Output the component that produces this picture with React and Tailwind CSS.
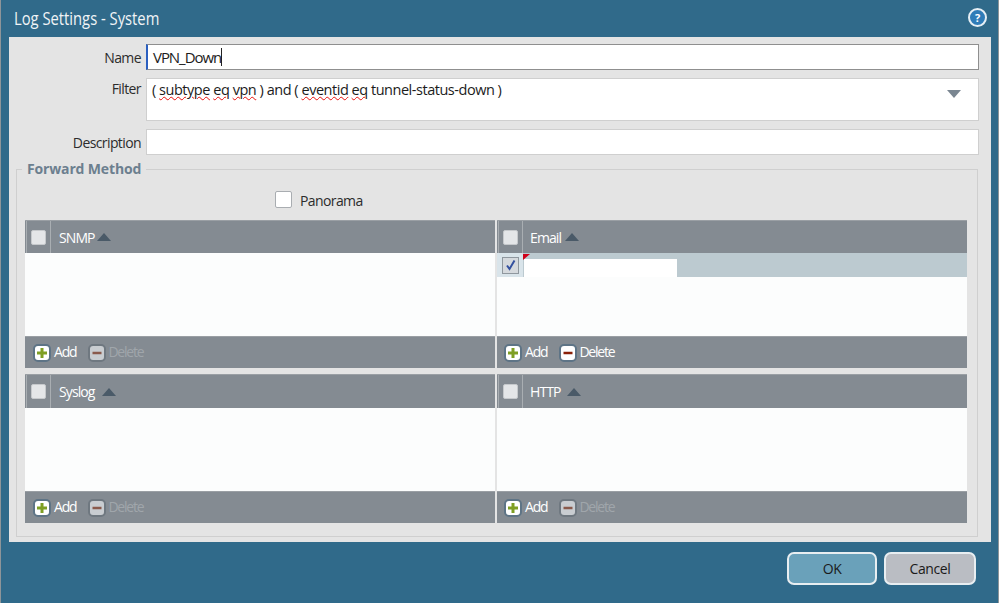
const font = { fontFamily: '"Open Sans", sans-serif' };

function CheckBox({ big }) {
  return (
    <div className={`${big ? 'w-[17px] h-[17px] bg-white border-[#a9adb1]' : 'w-[15px] h-[15px] bg-[#e4e6e8] border-[#c6c9cc]'} border rounded-[2px] shrink-0`}></div>
  );
}

function Triangle({ up, color }) {
  return (
    <svg width="14" height="8" viewBox="0 0 14 8" className="shrink-0">
      <path d={up ? 'M0 8 L14 8 L7 0 Z' : 'M0 0 L14 0 L7 8 Z'} fill={color} />
    </svg>
  );
}

function ActionIcon({ type, disabled }) {
  const fill = disabled ? 'bg-[#c9cdd1] border-[#6f7880]' : 'bg-white border-[#5e7486]';
  const plus = type === 'add';
  return (
    <div className={`w-[18px] h-[18px] rounded-[5px] border-2 ${fill} flex items-center justify-center shrink-0`}>
      <svg width="12" height="12" viewBox="0 0 12 12">
        {plus && <path d="M6 1 V11 M1 6 H11" stroke="#7f9f24" strokeWidth="3" />}
        {!plus && <path d="M1.5 6 H10.5" stroke={disabled ? '#8a5a4c' : '#8b2008'} strokeWidth="2.5" />}
      </svg>
    </div>
  );
}

function Panel({ title, deleteEnabled, children, tall, right, triangleGap }) {
  return (
    <div className="flex flex-col bg-[#fcfdfd]">
      <div className={`${tall ? 'h-[34px]' : 'h-[33px]'} bg-[#848b92] flex items-center text-white text-[14px] tracking-[-0.9px] border-t border-[#9a9fa4]`}>
        <div className="ml-[1px] w-[25px] h-full border-x border-[#a9aeb2] flex items-center justify-center">
          <CheckBox />
        </div>
        <span className={right ? 'ml-[7px]' : 'ml-[8px]'}>{title}</span>
        <div className={triangleGap}>
          <Triangle up color="#4a5a68" />
        </div>
      </div>
      <div className="flex-1">{children}</div>
      <div className={`h-[32px] bg-[#848b92] flex items-center ${right ? 'pl-[7px]' : 'pl-[8px]'} text-[14px] tracking-[-1.2px] border-t border-[#9a9fa4]`}>
        <ActionIcon type="add" />
        <span className="ml-[3px] pb-[2px] text-white">Add</span>
        <div className="ml-[12px]">
          <ActionIcon type="delete" disabled={!deleteEnabled} />
        </div>
        <span className={`ml-[2px] pb-[2px] ${deleteEnabled ? 'text-white' : 'text-[#a0a6ab]'}`}>Delete</span>
      </div>
    </div>
  );
}

function Row({ label, children, itemsStart, className }) {
  return (
    <div className={`flex gap-[5px] ${itemsStart ? 'items-start' : 'items-center'} ${className}`}>
      <div className="w-[125px] text-right text-[14px] tracking-[-0.6px] text-[#2c2c2c]">{label}</div>
      {children}
    </div>
  );
}

function Squiggle({ children }) {
  return <span className="underline decoration-wavy decoration-[#e8100c] decoration-1">{children}</span>;
}

export default function App() {
  return (
    <div style={font} className="w-[999px] h-[603px] bg-[#306a8a] border-x border-[#8e9599] flex flex-col overflow-hidden">
      <div className="h-[37px] shrink-0 flex items-center justify-between pl-[13px] pr-[11px] text-white">
        <span className="text-[18px] origin-left scale-x-[0.82] whitespace-nowrap text-[#f0f4f6]">Log Settings - System</span>
        <div className="mb-[2px] w-[19px] h-[19px] rounded-full bg-[#2f7cb8] border-2 border-[#e6eff5] flex items-center justify-center text-[11px] font-bold leading-none">?</div>
      </div>

      <div className="ml-[8px] mr-[7px] h-[505px] bg-[#e4e4e4] pt-[7px] pl-[7px] pr-[12px] shrink-0 flex flex-col">
        <Row label="Name" className="h-[26px]">
          <div className="flex-1 h-full bg-white border border-[#8f8f8f] border-l-2 border-l-[#2a5fc0] flex items-center pl-[5px] text-[15px] tracking-[-1.05px] text-[#1c1c1c]">
            VPN_Down<span className="w-px h-[18px] bg-[#222]"></span>
          </div>
        </Row>
        <Row label="Filter" itemsStart className="h-[43px] mt-[8px]">
          <div className="flex-1 h-full bg-white border border-[#cfcfcf] flex justify-between pl-[5px] pr-[17px] text-[14.5px] tracking-[-0.47px] text-[#1c1c1c]">
            <span>( <Squiggle>subtype</Squiggle> <Squiggle>eq</Squiggle> <Squiggle>vpn</Squiggle> ) and ( <Squiggle>eventid</Squiggle> <Squiggle>eq</Squiggle> tunnel-status-down )</span>
            <div className="pt-[11px]">
              <Triangle color="#7a8691" />
            </div>
          </div>
        </Row>
        <Row label="Description" className="h-[26px] mt-[8px]">
          <div className="flex-1 h-full bg-white border border-[#cfcfcf]"></div>
        </Row>

        <fieldset className="mt-[5px] mr-[1px] border border-[#cfcfcf] pl-[8px] pr-[10px] h-[377px]">
          <legend className="ml-[-3px] px-[5px] h-[18px] leading-[18px] text-[14px] font-bold tracking-[-0.15px] text-[#6c7f8f]">Forward Method</legend>
          <div className="mt-[13px] h-[17px] flex items-center pl-[250px] gap-[8px] text-[14px] tracking-[-0.6px] text-[#2c2c2c]">
            <CheckBox big />
            <span className="pt-[2px]">Panorama</span>
          </div>
          <div className="mt-[12px] grid grid-cols-2 gap-x-[2px] gap-y-[6px] grid-rows-[148px_149px]">
            <Panel title="SNMP" triangleGap="ml-[2px]" />
            <Panel title="Email" deleteEnabled right triangleGap="ml-[4px]">
              <div className="h-[24px] bg-[#bccad0] flex">
                <div className="w-[26px] bg-[#d9e4ea] flex items-center justify-center">
                  <div className="w-[17px] h-[17px] bg-[#d5d9dd] border border-[#8f979e] flex items-center justify-center">
                    <svg width="11" height="12" viewBox="0 0 11 12">
                      <path d="M2 6.5 L4.5 10 L9.5 1.5" fill="none" stroke="#33509f" strokeWidth="2" />
                    </svg>
                  </div>
                </div>
                <div className="relative w-[154px] flex flex-col justify-end">
                  <div className="absolute top-[1px] left-0 w-0 h-0 border-t-[6px] border-r-[7px] border-t-[#d0021b] border-r-transparent"></div>
                  <div className="h-[18px] ml-[1px] bg-white"></div>
                </div>
              </div>
            </Panel>
            <Panel title="Syslog" tall triangleGap="ml-[7px]" />
            <Panel title="HTTP" tall right triangleGap="ml-[6px]" />
          </div>
        </fieldset>
      </div>

      <div className="flex justify-end gap-[7px] pt-[10px] pr-[22px] text-[14px] tracking-[-0.4px] text-[#1a1a1a]">
        <button className="w-[90px] h-[33px] rounded-[7px] border-2 border-[#e8eef1] bg-[#6aa1ba]">OK</button>
        <button className="w-[92px] h-[33px] rounded-[7px] border-2 border-[#e8eef1] bg-[#babdc3]">Cancel</button>
      </div>
    </div>
  );
}
